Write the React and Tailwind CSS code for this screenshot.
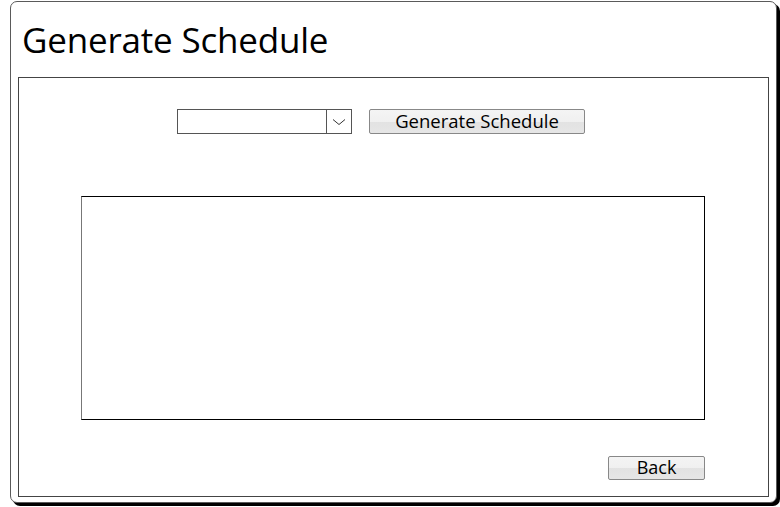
export default function App() {
  return (
    <div className="w-[780px] h-[507px] bg-white pl-[10px] pt-[1px] font-['Open_Sans',sans-serif] text-black">
      <div className="w-[767px] h-[502px] border border-[#5a5a5a] rounded-[7px] shadow-[3px_3px_0_0_#000] bg-white flex flex-col">
        <h1 className="h-[75px] pl-[11px] pt-[16px] text-[35px] leading-[44px] tracking-[-0.2px]">
          Generate Schedule
        </h1>

        <div className="ml-[7px] w-[751px] h-[420px] border border-[#444] flex flex-col">
          <div className="flex items-center gap-[17px] pl-[158px] pt-[31px]">
            <div className="w-[175px] h-[25px] border border-[#555] flex">
              <div className="flex-1" />
              <div className="w-[25px] border-l border-[#555] flex items-center justify-center">
                <svg width="14" height="8" viewBox="0 0 14 8" fill="none">
                  <path d="M1 1.5l6 5 6-5" stroke="#333" strokeWidth="1" />
                </svg>
              </div>
            </div>
            <button className="w-[216px] h-[25px] border border-[#888] rounded-[2px] bg-[linear-gradient(#f4f4f4_0%,#f0f0f0_50%,#e2e2e2_50%,#e6e6e6_100%)] text-[18.5px] leading-[22px] pb-[2px] flex items-center justify-center">
              Generate Schedule
            </button>
          </div>

          <div className="ml-[62px] mt-[62px] w-[624px] h-[224px] border border-black border-l-[#777]" />

          <div className="ml-[589px] mt-[36px]">
            <button className="w-[97px] h-[24px] border border-[#888] rounded-[2px] bg-[linear-gradient(#f4f4f4_0%,#f0f0f0_50%,#e2e2e2_50%,#e6e6e6_100%)] text-[18px] leading-[22px] pb-[2px] flex items-center justify-center">
              Back
            </button>
          </div>
        </div>
      </div>
    </div>
  );
}
